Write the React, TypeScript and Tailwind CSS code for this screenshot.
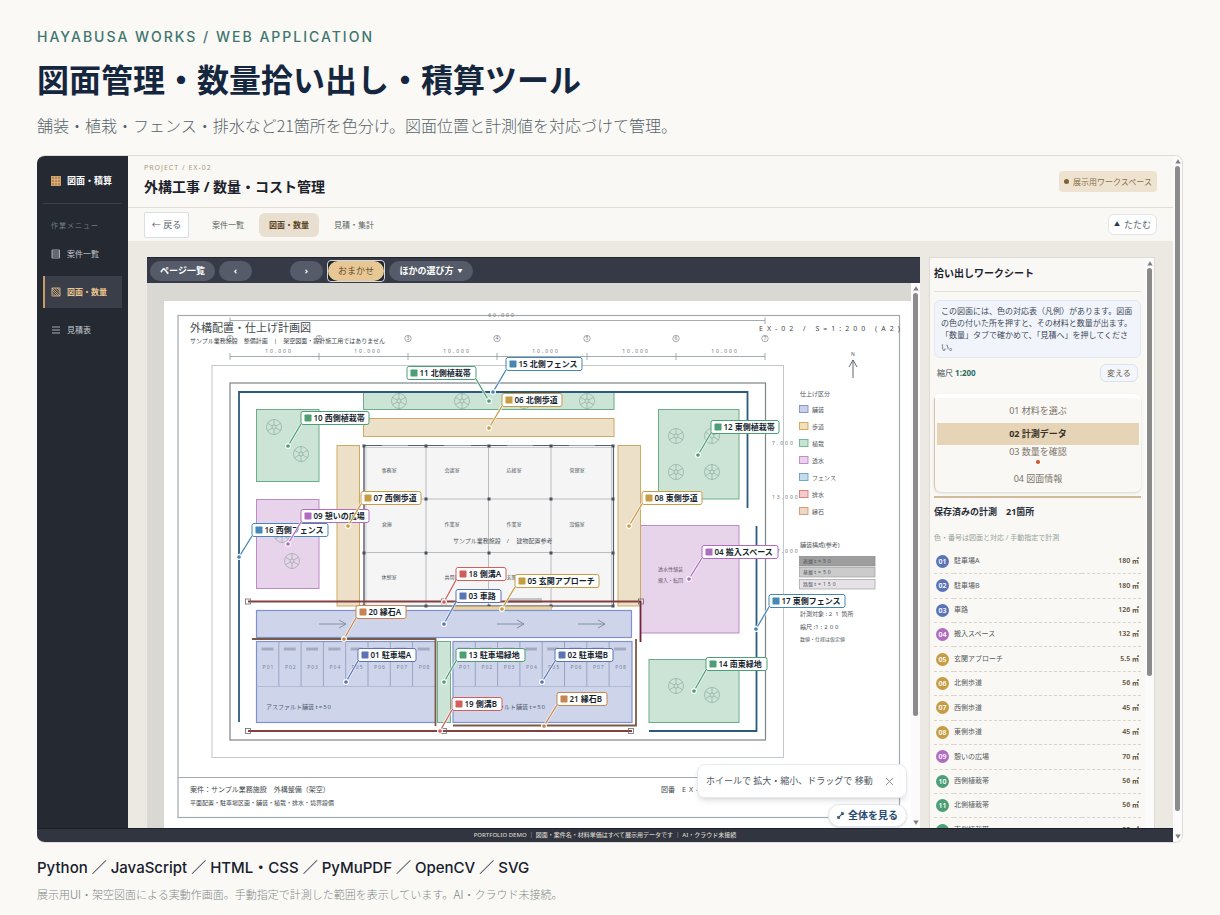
import React from 'react';
import { X } from 'lucide-react';

const BLUE = '#5b74b8';
const PURPLE = '#b06cc0';
const GOLD = '#c69c44';
const GREEN = '#4c9f74';
const STEEL = '#4587b5';
const RED = '#cf5f5c';
const COPPER = '#c58450';

type Callout = { no: string; name: string; x: number; y: number; w: number; dot: [number, number]; color: string; right?: boolean };

const callouts: Callout[] = [
  { no: '10', name: '西側植栽帯', x: 301, y: 411, w: 68, dot: [288, 446], color: GREEN },
  { no: '11', name: '北側植栽帯', x: 407, y: 366, w: 69, dot: [489, 401], color: GREEN, right: true },
  { no: '15', name: '北側フェンス', x: 506, y: 357, w: 76, dot: [493, 392], color: STEEL },
  { no: '06', name: '北側歩道', x: 502, y: 393, w: 60, dot: [489, 428], color: GOLD },
  { no: '07', name: '西側歩道', x: 361, y: 491, w: 60, dot: [348, 526], color: GOLD },
  { no: '08', name: '東側歩道', x: 642, y: 491, w: 60, dot: [629, 526], color: GOLD },
  { no: '12', name: '東側植栽帯', x: 711, y: 420, w: 68, dot: [698, 455], color: GREEN },
  { no: '09', name: '憩いの広場', x: 301, y: 509, w: 68, dot: [288, 544], color: PURPLE },
  { no: '16', name: '西側フェンス', x: 252, y: 523, w: 76, dot: [239, 557], color: STEEL },
  { no: '04', name: '搬入スペース', x: 702, y: 545, w: 76, dot: [689, 579], color: PURPLE },
  { no: '17', name: '東側フェンス', x: 769, y: 594, w: 76, dot: [756, 629], color: STEEL },
  { no: '18', name: '側溝A', x: 456, y: 567, w: 50, dot: [444, 602], color: RED },
  { no: '05', name: '玄関アプローチ', x: 515, y: 574, w: 84, dot: [502, 609], color: GOLD },
  { no: '03', name: '車路', x: 456, y: 589, w: 45, dot: [444, 624], color: BLUE },
  { no: '20', name: '縁石A', x: 356, y: 605, w: 50, dot: [344, 639], color: COPPER },
  { no: '01', name: '駐車場A', x: 358, y: 648, w: 58, dot: [346, 682], color: BLUE },
  { no: '02', name: '駐車場B', x: 555, y: 648, w: 58, dot: [542, 682], color: BLUE },
  { no: '13', name: '駐車場緑地', x: 456, y: 648, w: 69, dot: [444, 682], color: GREEN },
  { no: '14', name: '南東緑地', x: 706, y: 657, w: 61, dot: [694, 691], color: GREEN },
  { no: '19', name: '側溝B', x: 452, y: 697, w: 50, dot: [440, 731], color: RED },
  { no: '21', name: '縁石B', x: 557, y: 692, w: 50, dot: [544, 726], color: COPPER },
];

const measurements = [
  { no: '01', name: '駐車場A', value: '180 ㎡', color: BLUE },
  { no: '02', name: '駐車場B', value: '180 ㎡', color: BLUE },
  { no: '03', name: '車路', value: '126 ㎡', color: BLUE },
  { no: '04', name: '搬入スペース', value: '132 ㎡', color: PURPLE },
  { no: '05', name: '玄関アプローチ', value: '5.5 ㎡', color: GOLD },
  { no: '06', name: '北側歩道', value: '56 ㎡', color: GOLD },
  { no: '07', name: '西側歩道', value: '45 ㎡', color: GOLD },
  { no: '08', name: '東側歩道', value: '45 ㎡', color: GOLD },
  { no: '09', name: '憩いの広場', value: '70 ㎡', color: PURPLE },
  { no: '10', name: '西側植栽帯', value: '56 ㎡', color: GREEN },
  { no: '11', name: '北側植栽帯', value: '56 ㎡', color: GREEN },
  { no: '12', name: '東側植栽帯', value: '90 ㎡', color: GREEN },
];

const legend = [
  { name: '舗装', fill: '#c9d1ea', stroke: '#7c8fcb' },
  { name: '歩道', fill: '#f1dfbd', stroke: '#d0a550' },
  { name: '植栽', fill: '#c5e4d3', stroke: '#6bb08a' },
  { name: '透水', fill: '#ead1ec', stroke: '#bd86c8' },
  { name: 'フェンス', fill: '#c3dcec', stroke: '#6b9fc4' },
  { name: '排水', fill: '#f2cbcb', stroke: '#d67a78' },
  { name: '縁石', fill: '#efd7c3', stroke: '#cf9a6d' },
];

const gridX = [230, 319, 408, 497, 587, 676, 765];
const columnsX = [364, 426, 489, 551, 613];
const columnsY = [446, 499, 553, 606];

const rooms: [string, number, number][] = [
  ['事務室', 389, 472], ['会議室', 452, 472], ['応接室', 514, 472], ['管理室', 577, 472],
  ['倉庫', 387, 526], ['作業室', 452, 526], ['作業室', 514, 526], ['設備室', 577, 526],
  ['休憩室', 389, 579], ['共用部', 452, 579], ['玄関室', 514, 579],
];

const trees: [number, number][] = [
  [274, 427], [301, 454], [282, 535], [292, 561],
  [399, 401], [462, 401], [524, 401], [587, 401],
  [676, 436], [712, 436], [676, 472], [712, 472],
  [676, 686], [712, 695],
];

const Tree: React.FC<{ x: number; y: number }> = ({ x, y }) => (
  <g transform={`translate(${x} ${y})`} fill="none" stroke="#6d8c7e" strokeOpacity="0.55" strokeWidth="0.8">
    <circle r="7.5" />
    <circle r="2" />
    <path d="M0-7.5V-2M0 2V7.5M-6.5-3.7L-1.7-1M6.5 3.7L1.7 1M-6.5 3.7L-1.7 1M6.5-3.7L1.7-1" />
  </g>
);

const Parking: React.FC<{ x: number; label: number }> = ({ x, label }) => (
  <g>
    <rect x={x} y="641.5" width="179" height="81" fill="#ced5ea" stroke="#7f92cb" strokeWidth="1.2" />
    <path d={`M${x} 686.5H${x + 179}`} stroke="#a9b2cc" strokeWidth="0.8" />
    {[0, 1, 2, 3, 4, 5, 6, 7].map(i => (
      <g key={i}>
        {i > 0 && <path d={`M${x + i * 22.3} 642V686`} stroke="#8c97b8" strokeWidth="0.8" />}
        <rect x={x + 5 + i * 22.3} y="647.5" width="12" height="3" fill="#a3abc3" />
        <text x={x + 12 + i * 22.3} y="669" fontSize="5" letterSpacing="1" textAnchor="middle" fill="#77819c">P0{i + 1}</text>
      </g>
    ))}
    <text x={label} y="709" fontSize="6" fill="#535c72">アスファルト舗装 <tspan letterSpacing="1">t=50</tspan></text>
  </g>
);

const SitePlan: React.FC = () => (
  <svg
    viewBox="147 283 764 545"
    width="764"
    height="545"
    className="block shrink-0"
    fontFamily='"Noto Sans", "Noto Sans CJK JP", sans-serif'
    role="img"
    aria-label="外構配置・仕上げ計画図"
  >
    <rect x="164" y="301" width="747" height="527" fill="#fff" />
    <g fill="none" stroke="#a3a9ad">
      <rect x="178" y="315.500" width="721.5" height="502" strokeWidth="1.2" />
      <path d="M178 777.5H899.5" />
      <rect x="212" y="365.5" width="571.5" height="392" stroke="#c3c7c9" />
      <rect x="230" y="383" width="535.5" height="357" stroke="#7d8488" strokeWidth="1.2" />
    </g>

    {/* dimension lines */}
    <g stroke="#90979b" strokeWidth="0.8" fill="none">
      <path d="M230 320.500H765M230 317.500V324M765 317.500V324M230 356.500H765" />
      {gridX.map(x => <path key={x} d={`M${x} 353V360`} />)}
      {gridX.map(x => <circle key={x} cx={x} cy="338.5" r="3.2" />)}
    </g>
    <g fontSize="5" fill="#6d7478" textAnchor="middle">
      {gridX.map((x, i) => <text key={x} x={x} y="340">{i + 1}</text>)}
      {gridX.slice(0, 6).map(x => <text key={x} x={x + 49} y="353" letterSpacing="2">10,000</text>)}
      <text x="502" y="317" letterSpacing="2">60,000</text>
    </g>
    <g fontSize="5" fill="#6d7478" letterSpacing="2">
      <text x="772" y="445">7,000</text>
      <text x="772" y="499">13,000</text>
      <text x="772" y="553">17,000</text>
    </g>

    {/* sheet titles */}
    <g fill="#42494e">
      <text x="190" y="332" fontSize="11">外構配置・仕上げ計画図</text>
      <text x="190" y="343" fontSize="6">サンプル業務施設　整備計画　|　架空図面・設計施工用ではありません</text>
      <text x="759" y="331" fontSize="7" letterSpacing="4">EX-02 / S=1:200 (A2)</text>
      <text x="190" y="792" fontSize="7">案件：サンプル業務施設　外構整備（架空）</text>
      <text x="190" y="805" fontSize="6">平面配置・駐車場区画・舗装・植栽・排水・境界設備</text>
      <text x="661" y="792" fontSize="7">図番　<tspan letterSpacing="3">EX-02</tspan></text>
    </g>

    {/* planting, paths and paving */}
    <g fill="#cbe4d6" stroke="#6cac89">
      <rect x="256.500" y="409.500" width="62.5" height="72" />
      <rect x="363.500" y="392" width="250.5" height="17.5" />
      <rect x="658.500" y="409.500" width="80.5" height="89.5" />
      <rect x="649" y="659.500" width="90" height="63" />
      <rect x="437.500" y="641.500" width="13" height="81" />
    </g>
    <g fill="#e8d4ea" stroke="#bd8ac8">
      <rect x="256.500" y="499.500" width="62.5" height="89" />
      <rect x="640.500" y="525.500" width="98.500" height="107.5" />
    </g>
    <g fill="#ece0c9" stroke="#cfa964">
      <rect x="337" y="445.500" width="22.5" height="160.5" />
      <rect x="363.500" y="418.500" width="250.5" height="18" />
      <rect x="618" y="445.500" width="22.5" height="160.5" />
    </g>
    {trees.map(([x, y]) => <Tree key={`${x}-${y}`} x={x} y={y} />)}

    {/* building */}
    <rect x="364" y="445.500" width="249.500" height="160.500" fill="#f5f5f6" stroke="#9a9fa5" strokeWidth="1" />
    <path d="M426 446V606M488.500 446V606M551 446V606M364 499H613M364 552.500H613" stroke="#a9adb3" strokeWidth="0.8" />
    <path d="M366 447.500H611.500V604M366 447.500V604" stroke="#c9ccd0" fill="none" />
    <path d="M364 445.500H382M408 445.500H444M471 445.500H507M533 445.500H569M595 445.500H613.500V606H364V445.500" fill="none" stroke="#5b6068" strokeWidth="1.2" />
    {columnsX.map(x => columnsY.map(y => (
      <rect key={`${x}-${y}`} x={x - 1.5} y={y - 1.5} width="3" height="3" fill="#4b5057" />
    )))}
    <g fontSize="5" fill="#50565b" textAnchor="middle">
      {rooms.map(([name, x, y]) => <text key={`${x}-${y}`} x={x} y={y}>{name}</text>)}
    </g>
    <text x="453" y="543" fontSize="6" fill="#50565b">サンプル業務施設　/　 建物配置参考</text>
    <rect x="507" y="598" width="35" height="5" fill="#c4c4c6" />
    <rect x="453" y="606.500" width="98.500" height="4" fill="#e6d3ab" stroke="#cfa964" strokeWidth="0.6" />
    <g fontSize="5" fill="#6b5a70">
      <text x="658" y="571">透水性舗装</text>
      <text x="658" y="582">搬入・転回</text>
    </g>

    {/* roadway and parking */}
    <rect x="256.500" y="610.500" width="375" height="27" fill="#ced5ea" stroke="#7f92cb" strokeWidth="1.2" />
    <path d="M319 624H346M339 620L346 624L339 628M497 624H524M517 620L524 624L517 628M578 624H605M598 620L605 624L598 628" fill="none" stroke="#7e879e" strokeWidth="0.9" />
    <Parking x={256.5} label={266} />
    <Parking x={453} label={480} />

    {/* fences, gutters and curbs */}
    <g fill="none" strokeWidth="1.8">
      <path d="M239 722V392H747.500V508M756.500 526V731H649" stroke="#2c5a7c" />
      <path d="M248 601.500H640.500M248 731H632" stroke="#82403f" />
      <path d="M640.500 601V642" stroke="#74203a" />
      <path d="M252 639H435.500V726M636 639V725.500H453" stroke="#7b5a44" />
    </g>
    <g fill="none" stroke="#6e6664" strokeWidth="0.8">
      {[248, 444, 641].map(x => <rect key={x} x={x - 2.5} y="599" width="5" height="5" />)}
      {[248, 444, 631].map(x => <rect key={x} x={x - 2.5} y="728.500" width="5" height="5" />)}
    </g>

    {/* compass and legend */}
    <text x="853" y="356" fontSize="5" textAnchor="middle" fill="#50565b">N</text>
    <path d="M853 378V360M849 367L853 360L857 367" fill="none" stroke="#60676c" strokeWidth="1" />
    <g fill="#50565b" fontSize="6">
      <text x="800" y="396">仕上げ区分</text>
      {legend.map((item, i) => (
        <g key={item.name}>
          <rect x="799.500" y={405.5 + i * 17} width="8.500" height="7" fill={item.fill} stroke={item.stroke} strokeWidth="0.9" />
          <text x="812" y={411.5 + i * 17} fontSize="6">{item.name}</text>
        </g>
      ))}
      <text x="800" y="547">舗装構成(参考)</text>
      <rect x="799.500" y="556.500" width="75.500" height="9.500" fill="#9e9e9f" stroke="#87878a" strokeWidth="0.7" />
      <rect x="799.500" y="567.500" width="75.500" height="9.500" fill="#cbcbcc" stroke="#9f9fa2" strokeWidth="0.7" />
      <rect x="799.500" y="579.500" width="75.500" height="9.500" fill="#e6e1e7" stroke="#9f9fa2" strokeWidth="0.7" />
      <text x="803" y="563" fontSize="5">表層 <tspan letterSpacing="2">t=50</tspan></text>
      <text x="803" y="574" fontSize="5">基層 <tspan letterSpacing="2">t=50</tspan></text>
      <text x="803" y="586" fontSize="5">路盤 <tspan letterSpacing="2">t=150</tspan></text>
      <text x="800" y="616">計測対象 : <tspan letterSpacing="3">21</tspan>箇所</text>
      <text x="800" y="629">縮尺 :<tspan letterSpacing="2">1:200</tspan></text>
      <text x="800" y="641" fontSize="5">数値・仕様は仮定値</text>
    </g>

    {/* callouts: leaders stay above every label */}
    {callouts.map(c => (
      <g key={c.no}>
        <rect x={c.x} y={c.y + 0.5} width={c.w} height="13" rx="2" fill="#fff" stroke={c.color} />
        <rect x={c.x + 3.5} y={c.y + 3.5} width="7" height="7" rx="0.8" fill={c.color} />
        <text x={c.x + 12.5} y={c.y + 10} fontSize="8" fontWeight="600" fill="#161f2e">{c.no} {c.name}</text>
      </g>
    ))}
    {callouts.map(c => {
      const startX = c.right ? c.x + c.w : c.x;
      const line = `M${startX} ${c.y + 13}L${c.dot[0]} ${c.dot[1]}`;
      return (
        <g key={c.no} fill="none">
          <path d={line} stroke="#fff" strokeWidth="2.6" strokeOpacity="0.8" />
          <path d={line} stroke={c.color} strokeWidth="1.3" />
          <circle cx={c.dot[0]} cy={c.dot[1]} r="2.4" fill={c.color} stroke="#fff" strokeWidth="1.1" />
        </g>
      );
    })}
  </svg>
);

const Arrow: React.FC<{ down?: boolean }> = ({ down }) => (
  <svg viewBox="0 0 6 5" className="h-[5px] w-[6px] shrink-0" fill="#7f7f7f" aria-hidden="true">
    <path d={down ? 'M0.300 0.500H5.700L3 4.700Z' : 'M0.300 4.500H5.700L3 0.300Z'} />
  </svg>
);

const Scrollbar: React.FC<{ size: string; thumb: string; end?: boolean }> = ({ size, thumb, end }) => (
  <div className={`flex shrink-0 flex-col items-center gap-[2px] bg-[#fbfbfb] py-[3px] ${size}`}>
    <Arrow />
    <div className={`w-[5px] rounded-full bg-[#8b8b8b] ${thumb}`} />
    {end && <div className="mt-auto"><Arrow down /></div>}
  </div>
);

const MenuIcon: React.FC<{ kind: 'grid' | 'rows' | 'hatch' | 'lines' }> = ({ kind }) => (
  <svg viewBox="0 0 10 10" className="size-[10px] shrink-0" fill="none" stroke="currentColor" strokeWidth="0.8" aria-hidden="true">
    {kind === 'grid' && <><rect x="0.500" y="0.500" width="9" height="9" fill="#b98a55" /><path d="M0.500 3.500H9.500M0.500 6.500H9.500M3.500 0.500V9.500M6.500 0.500V9.500" /></>}
    {kind === 'rows' && <path d="M1 1H8.500V9H1ZM1 3H8.500M1 5H8.500M1 7H8.500" />}
    {kind === 'hatch' && <path d="M1 1H9V9H1ZM1 3L7 9M1 5.500L4.500 9M1 1L9 9M3.500 1L9 6.500M6 1L9 4" />}
    {kind === 'lines' && <path d="M1 2H9M1 5H9M1 8H9" />}
  </svg>
);

const Sidebar: React.FC = () => (
  <aside className="w-[91px] shrink-0 bg-[#242932] px-[6px] text-[8px]">
    <div className="flex h-12 items-center gap-[6px] border-b border-[#3b4049] pt-[3px] pl-2 text-[#e0b27a]">
      <MenuIcon kind="grid" />
      <span className="text-[9px] font-bold text-white">図面・積算</span>
    </div>
    <p className="mt-4 pl-2 text-[7px] leading-3 tracking-[1px] text-[#6f7f7f]">作業メニュー</p>
    <nav className="mt-[6px] flex flex-col gap-[6px]">
      <a href="#projects" className="flex h-8 items-center gap-[6px] pl-2 text-[#c6cad0]"><MenuIcon kind="rows" />案件一覧</a>
      <a href="#drawings" className="flex h-8 items-center gap-[6px] border-l-2 border-[#c99a64] bg-[#3a3e49] pl-[6px] font-bold text-[#eac58f]"><MenuIcon kind="hatch" />図面・数量</a>
      <a href="#estimates" className="flex h-8 items-center gap-[6px] pl-2 text-[#c6cad0]"><MenuIcon kind="lines" />見積表</a>
    </nav>
  </aside>
);

const Worksheet: React.FC = () => (
  <section className="flex w-[226px] shrink-0 overflow-hidden border border-b-0 border-[#dedbd5] bg-[#f9f8f5]">
    <div className="flex min-w-0 flex-1 flex-col px-1">
      <h2 className="h-[34px] shrink-0 border-b border-[#e4dfd6] text-[10px] leading-[30px] font-bold text-[#1d2430]">拾い出しワークシート</h2>
      <p className="mt-2 shrink-0 rounded-md border border-[#e1e8f2] bg-[#f1f5fb] px-[6px] py-1 text-[8px] leading-3 text-[#3f4a5a]">
        この図面には、色の対応表（凡例）があります。図面の色の付いた所を押すと、その材料と数量が出ます。「数量」タブで確かめて、「見積へ」を押してください。
      </p>
      <div className="mt-[6px] flex h-[18px] shrink-0 items-center justify-between px-[3px] text-[8px] text-[#4a4f55]">
        <span>縮尺 <b className="text-[#2a6b5f]">1:200</b></span>
        <button type="button" className="h-[18px] w-[38px] rounded-md border border-[#dae2ed] bg-[#f3f6fb] text-[8px] text-[#6c5f4a]">変える</button>
      </div>
      <div className="mt-3 flex shrink-0 flex-col rounded-md border-t-4 border-l border-t-white border-l-[#d8c4a8] py-px pr-[2px] pl-[2px] text-[9px] text-[#7d746a] shadow-sm">
        <button type="button" className="h-6">01 材料を選ぶ</button>
        <button type="button" className="h-[22px] bg-[#e6d4b7] font-bold text-[#3a3128]">02 計測データ</button>
        <button type="button" className="relative h-[22px] pb-[8px] leading-3">
          03 数量を確認
          <span className="absolute bottom-[3px] left-1/2 size-[4px] -translate-x-1/2 rounded-full bg-[#d5502c]" />
        </button>
        <button type="button" className="h-6">04 図面情報</button>
      </div>
      <h3 className="mt-1 shrink-0 border-t-2 border-[#d2bb9b] pt-[6px] text-[9px] leading-4 font-bold text-[#262d37]">保存済みの計測　21箇所</h3>
      <p className="mt-3 shrink-0 text-[7px] leading-3 text-[#95a19a]">色・番号は図面と対応 / 手動指定で計測</p>
      <table className="mt-[6px] h-[293px] w-full shrink-0 border-collapse text-[8px]">
        <tbody>
          {measurements.map(item => (
            <tr key={item.no} className="border-b border-dashed border-[#d9d3c8]">
              <td className="w-5 pl-[2px]">
                <span className="flex size-[13px] items-center justify-center rounded-full text-[7px] leading-none font-semibold text-white" style={{ backgroundColor: item.color }}>{item.no}</span>
              </td>
              <td className="text-[7px] text-[#565b5e]">{item.name}</td>
              <td className="pr-[2px] text-right text-[7px] font-semibold text-[#5f5136]">{item.value}</td>
            </tr>
          ))}
        </tbody>
      </table>
    </div>
    <Scrollbar size="w-[9px]" thumb="h-[408px]" />
  </section>
);

const pill = 'h-5 rounded-full bg-[#555b68] text-[9px] font-bold text-white';

const DrawingPanel: React.FC = () => (
  <section className="relative flex min-w-0 flex-1 flex-col overflow-hidden">
    <div className="flex h-[26px] shrink-0 items-center gap-1 border-t border-[#20242d] bg-[#353a46] px-[3px]">
      <button type="button" className={`w-[65px] ${pill}`}>ページ一覧</button>
      <button type="button" className={`mr-[34px] w-[33px] ${pill}`}>‹</button>
      <button type="button" className={`w-[33px] ${pill}`}>›</button>
      <span className="flex h-[22px] w-[58px] rounded-sm border border-[#d5d8dc] bg-[#20242d]">
        <button type="button" className="h-5 w-full rounded-full bg-[#e7c794] text-[9px] text-[#6a5434]">おまかせ</button>
      </span>
      <button type="button" className={`flex w-[84px] items-center justify-center gap-1 ${pill}`}>
        ほかの選び方 <span className="text-[5px]">▼</span>
      </button>
    </div>
    <div className="flex min-h-0 flex-1 bg-[#dad8d2]">
      <div className="min-w-0 flex-1 overflow-hidden">
        <SitePlan />
      </div>
      <Scrollbar size="w-[9px]" thumb="h-[423px]" end />
    </div>
    <div className="absolute right-[13px] bottom-[30px] flex h-[34px] w-[210px] items-center justify-between rounded-lg border border-[#e5e9f0] bg-white/95 pr-[10px] pl-2 text-[9px] text-[#4d5663] shadow-md">
      ホイールで 拡大・縮小、ドラッグで 移動
      <button type="button" aria-label="閉じる"><X size={13} strokeWidth={1.5} className="text-[#707883]" /></button>
    </div>
    <button type="button" className="absolute right-[13px] bottom-px flex h-[23px] w-[79px] items-center justify-center gap-1 rounded-full border border-[#e1e7ef] bg-white text-[10px] font-bold text-[#274a70] shadow">
      <svg viewBox="0 0 8 8" className="size-[7px]" fill="none" stroke="currentColor" strokeWidth="1.300" aria-hidden="true">
        <path d="M1 7L7 1M4.500 1H7V3.500M1 4.500V7H3.500" />
      </svg>
      全体を見る
    </button>
  </section>
);

const App: React.FC = () => {
  return (
    <div className="flex h-screen flex-col bg-[#faf9f5] px-[37px] font-['Noto_Sans_CJK_JP',sans-serif]" lang="ja">
      <header className="shrink-0 pt-7">
        <p className="font-['Inter',sans-serif] text-[14px] leading-[18px] font-medium tracking-[2px] text-[#3f7670]">HAYABUSA WORKS / WEB APPLICATION</p>
        <h1 className="mt-[10px] text-[32px] leading-[44px] font-bold text-[#15263f]">図面管理・数量拾い出し・積算ツール</h1>
        <p className="mt-[13px] text-[16px] leading-6 font-light text-[#56636a]">舗装・植栽・フェンス・排水など21箇所を色分け。図面位置と計測値を対応づけて管理。</p>
      </header>

      <div className="mt-[18px] flex min-h-0 flex-1 overflow-hidden rounded-lg border border-l-0 border-[#dddcd8] font-['Noto_Sans','Noto_Sans_CJK_JP',sans-serif]">
        <div className="flex min-w-0 flex-1 flex-col">
          <div className="flex min-h-0 flex-1">
            <Sidebar />
            <main className="flex min-w-0 flex-1 flex-col bg-[#ece9e3]">
              <div className="flex h-[52px] shrink-0 items-center justify-between border-b border-[#e3dcd2] bg-[#f9f8f4] pr-4 pl-4">
                <div className="self-start pt-[6px]">
                  <p className="text-[7px] leading-3 tracking-[1px] text-[#a8997f]">PROJECT / EX-02</p>
                  <h2 className="mt-[3px] text-[14px] leading-5 font-bold text-[#1c222c]">外構工事 / 数量・コスト管理</h2>
                </div>
                <span className="flex h-[21px] w-[98px] items-center justify-center gap-1 rounded-sm bg-[#eee2d1] text-[8px] text-[#8b7048]">
                  <span className="size-[5px] rounded-full bg-[#80602e]" />
                  展示用ワークスペース
                </span>
              </div>
              <div className="flex h-[33px] shrink-0 items-center bg-[#f9f8f4] px-4 text-[8px] text-[#59645f]">
                <button type="button" className="mr-3 h-[26px] w-[45px] rounded-xs border border-[#d6dfe5] bg-white text-[9px] text-[#5c6670]">← 戻る</button>
                <button type="button" className="h-6 w-[54px]">案件一覧</button>
                <button type="button" className="mx-1 h-6 w-[60px] rounded-md bg-[#e9dfd1] font-bold text-[#5c4423]">図面・数量</button>
                <button type="button" className="h-6 w-[62px]">見積・集計</button>
                <button type="button" className="ml-auto flex h-[21px] w-[49px] items-center justify-center gap-1 rounded-md border border-[#e1e4e8] bg-white text-[9px] text-[#626a75]">
                  <span className="text-[6px] text-[#2b3850]">▲</span>たたむ
                </button>
              </div>
              <div className="flex min-h-0 flex-1 gap-[9px] pt-4 pr-[18px] pl-[19px]">
                <DrawingPanel />
                <Worksheet />
              </div>
            </main>
          </div>
          <div className="h-[14px] shrink-0 border-t border-[#1b1f27] bg-[#31353f] text-center text-[6px] leading-3 font-medium text-[#d8d3c8]">
            PORTFOLIO DEMO ｜ 図面・案件名・材料単価はすべて展示用データです ｜ AI・クラウド未接続
          </div>
        </div>
        <Scrollbar size="w-[9px]" thumb="h-[645px]" end />
      </div>

      <footer className="shrink-0 pt-[17px] pb-[10px] font-['Inter','Noto_Sans_CJK_JP',sans-serif]">
        <p className="text-[15px] leading-4 font-medium text-[#17202e]">Python ／ JavaScript ／ HTML・CSS ／ PyMuPDF ／ OpenCV ／ SVG</p>
        <p className="mt-[9px] text-[11px] leading-5 font-light text-[#83898a]">展示用UI・架空図面による実動作画面。手動指定で計測した範囲を表示しています。AI・クラウド未接続。</p>
      </footer>
    </div>
  );
};

export default App;
